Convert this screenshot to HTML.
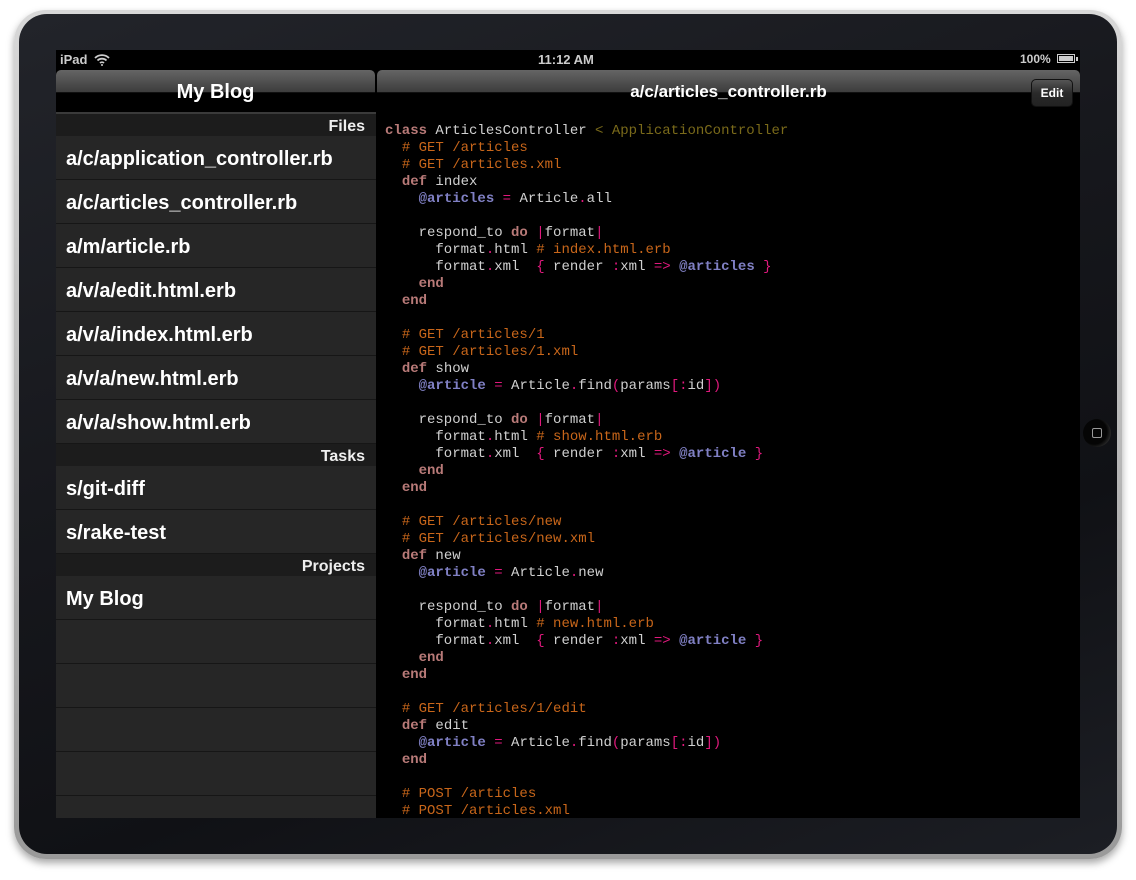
<!DOCTYPE html>
<html><head><meta charset="utf-8"><style>
*{margin:0;padding:0;box-sizing:border-box}
body{width:1136px;height:880px;background:#fff;position:relative;overflow:hidden;font-family:"Liberation Sans",sans-serif}
.frame{position:absolute;left:14px;top:10px;width:1108px;height:849px;border-radius:32px;background:linear-gradient(#d8d8d8,#9a9a9a);box-shadow:0 4px 8px rgba(0,0,0,.35)}
.bezel{position:absolute;left:19px;top:14px;width:1098px;height:840px;border-radius:28px;background:linear-gradient(160deg,#22242a 0%,#17181d 40%,#101115 70%,#1c1e24 100%)}
.screen{position:absolute;left:56px;top:50px;width:1024px;height:768px;background:#000;overflow:hidden}
.status{position:absolute;left:0;top:0;width:1024px;height:20px;color:#ccc;font-size:13px;font-weight:bold}
.nav{position:absolute;top:20px;height:42px;background:linear-gradient(#656565 0%,#3d3d3d 52%,#000 54%,#000 100%);border-radius:5px 5px 0 0;color:#fff;font-weight:bold;font-size:20px;text-align:center;line-height:44px}
.left{position:absolute;left:0;top:62px;width:320px;height:706px;background:#262626;border-top:2px solid #3a3a3a}
.sec{height:22px;background:#1c1c1c;color:#eee;font-weight:bold;font-size:16px;text-align:right;padding-right:11px;line-height:25px}
.row{height:44px;border-bottom:1px solid #161616;color:#fff;font-weight:bold;font-size:20px;line-height:46px;padding-left:10px}
.code{position:absolute;left:329px;top:73px;font-family:"Liberation Mono",monospace;font-size:14px;line-height:17px;white-space:pre;color:#d0d0d0}
.k{color:#b87a78;font-weight:bold}.c{color:#c8661a}.s{color:#7a6a1a}.i{color:#8080c4;font-weight:bold}.p{color:#e0197d}
.edit{position:absolute;right:7px;top:9px;width:42px;height:28px;border-radius:5px;background:linear-gradient(#555,#2a2a2a 50%,#222);border:1px solid #111;color:#fff;font-size:12px;font-weight:bold;text-align:center;line-height:26px}
.home{position:absolute;left:1083px;top:419px;width:28px;height:28px;border-radius:50%;background:radial-gradient(circle at 40% 45%,#050505 55%,#555 100%)}
.home i{position:absolute;left:9px;top:9px;width:10px;height:10px;border:1.5px solid #999;border-radius:2px}
</style></head><body>
<div class="frame"></div><div class="bezel"></div>
<div class="home"><i></i></div>
<div class="screen">
<div class="status"><span style="position:absolute;left:4px;top:2px">iPad</span>
<svg style="position:absolute;left:38px;top:3px" width="16" height="13" viewBox="0 0 16 13"><path d="M1 5a10 10 0 0 1 14 0M3.5 7.5a6.5 6.5 0 0 1 9 0M6 10a3 3 0 0 1 4 0" stroke="#ccc" stroke-width="1.8" fill="none"/><circle cx="8" cy="12" r="1" fill="#ccc"/></svg>
<span style="position:absolute;left:482px;top:2px">11:12 AM</span>
<span style="position:absolute;left:964px;top:2px;font-size:12px">100%</span>
<span style="position:absolute;left:1001px;top:4px;width:18px;height:9px;border:1px solid #ccc;padding:1px"><span style="display:block;width:100%;height:100%;background:#ccc"></span></span><span style="position:absolute;left:1020px;top:7px;width:2px;height:4px;background:#ccc"></span>
</div>
<div class="nav" style="left:0;width:319px">My Blog</div>
<div class="nav" style="left:321px;width:703px;font-size:17px">a/c/articles_controller.rb<div class="edit">Edit</div></div>
<div class="left">
<div class="sec">Files</div>
<div class="row">a/c/application_controller.rb</div>
<div class="row">a/c/articles_controller.rb</div>
<div class="row">a/m/article.rb</div>
<div class="row">a/v/a/edit.html.erb</div>
<div class="row">a/v/a/index.html.erb</div>
<div class="row">a/v/a/new.html.erb</div>
<div class="row">a/v/a/show.html.erb</div>
<div class="sec">Tasks</div>
<div class="row">s/git-diff</div>
<div class="row">s/rake-test</div>
<div class="sec">Projects</div>
<div class="row">My Blog</div>
<div class="row"></div><div class="row"></div><div class="row"></div><div class="row"></div><div class="row"></div>
</div>
<div class="code"><span class="k">class</span> ArticlesController <span class="s">&lt; ApplicationController</span>
  <span class="c"># GET /articles</span>
  <span class="c"># GET /articles.xml</span>
  <span class="k">def</span> index
    <span class="i">@articles</span> <span class="p">=</span> Article<span class="p">.</span>all

    respond_to <span class="k">do</span> <span class="p">|</span>format<span class="p">|</span>
      format<span class="p">.</span>html <span class="c"># index.html.erb</span>
      format<span class="p">.</span>xml  <span class="p">{</span> render <span class="p">:</span>xml <span class="p">=&gt;</span> <span class="i">@articles</span> <span class="p">}</span>
    <span class="k">end</span>
  <span class="k">end</span>

  <span class="c"># GET /articles/1</span>
  <span class="c"># GET /articles/1.xml</span>
  <span class="k">def</span> show
    <span class="i">@article</span> <span class="p">=</span> Article<span class="p">.</span>find<span class="p">(</span>params<span class="p">[:</span>id<span class="p">])</span>

    respond_to <span class="k">do</span> <span class="p">|</span>format<span class="p">|</span>
      format<span class="p">.</span>html <span class="c"># show.html.erb</span>
      format<span class="p">.</span>xml  <span class="p">{</span> render <span class="p">:</span>xml <span class="p">=&gt;</span> <span class="i">@article</span> <span class="p">}</span>
    <span class="k">end</span>
  <span class="k">end</span>

  <span class="c"># GET /articles/new</span>
  <span class="c"># GET /articles/new.xml</span>
  <span class="k">def</span> new
    <span class="i">@article</span> <span class="p">=</span> Article<span class="p">.</span>new

    respond_to <span class="k">do</span> <span class="p">|</span>format<span class="p">|</span>
      format<span class="p">.</span>html <span class="c"># new.html.erb</span>
      format<span class="p">.</span>xml  <span class="p">{</span> render <span class="p">:</span>xml <span class="p">=&gt;</span> <span class="i">@article</span> <span class="p">}</span>
    <span class="k">end</span>
  <span class="k">end</span>

  <span class="c"># GET /articles/1/edit</span>
  <span class="k">def</span> edit
    <span class="i">@article</span> <span class="p">=</span> Article<span class="p">.</span>find<span class="p">(</span>params<span class="p">[:</span>id<span class="p">])</span>
  <span class="k">end</span>

  <span class="c"># POST /articles</span>
  <span class="c"># POST /articles.xml</span></div>
</div>
</body></html>
